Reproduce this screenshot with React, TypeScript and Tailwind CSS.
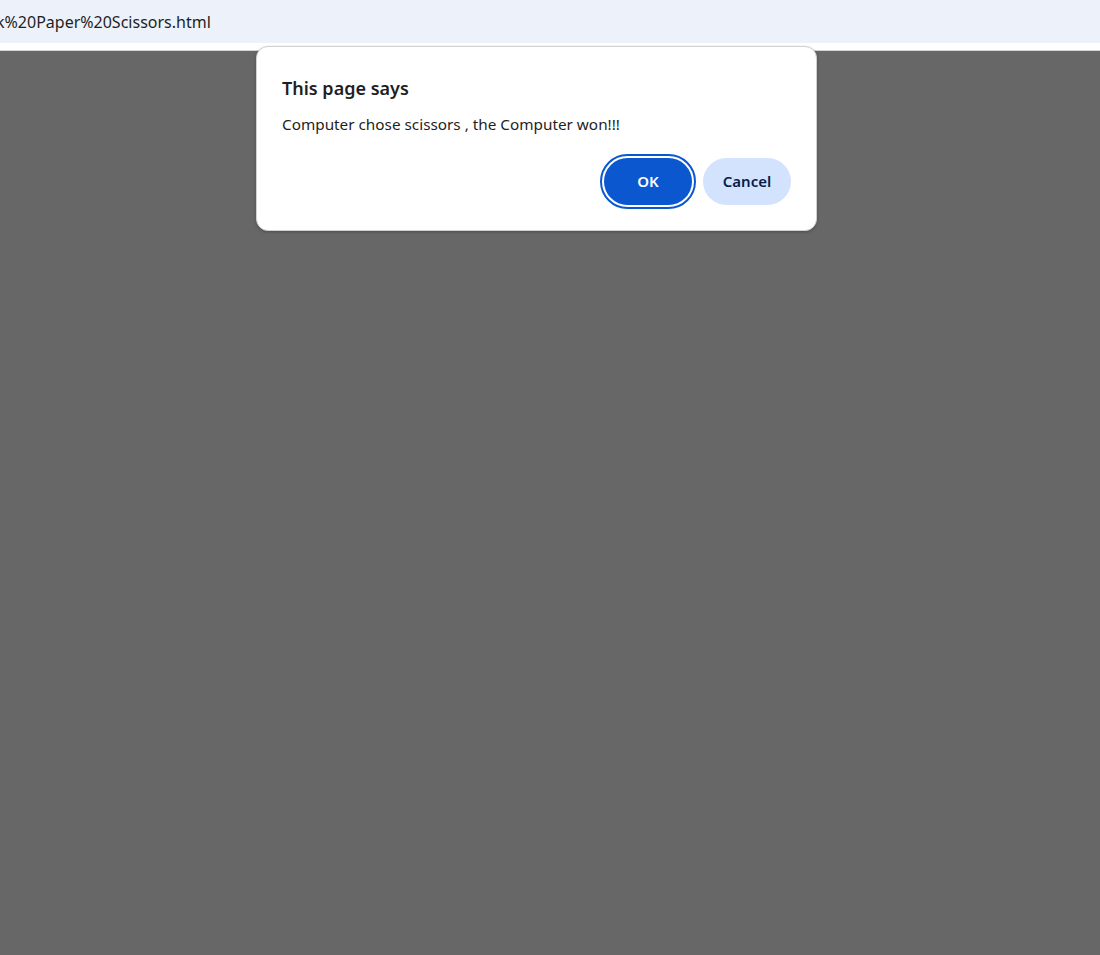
const App = () => {
  return (
    <div className="relative flex h-[955px] w-[1100px] flex-col overflow-hidden bg-white font-['Noto_Sans','Open_Sans',sans-serif]">
      {/* Address bar strip */}
      <div className="flex h-[43px] items-center bg-[#ecf1fa] overflow-hidden">
        <span className="-ml-[4px] whitespace-nowrap text-[16px] text-[#1f1f1f]">k%20Paper%20Scissors.html</span>
      </div>
      <div className="h-[7px] bg-white" />
      <div className="h-[1px] bg-[#d4d4d4]" />

      {/* Dimmed page */}
      <div className="flex-1 bg-[#676767]" />

      {/* Alert dialog */}
      <div className="absolute left-[256px] top-[46px] w-[561px] rounded-[12px] border border-[#d0d0d0] bg-white px-[25px] pt-[28px] pb-[25px] shadow-[0_1px_3px_rgba(0,0,0,0.25)]">
        <h2 className="text-[18px] font-semibold leading-[26px] text-[#1f1f1f]">This page says</h2>
        <p className="mt-[13px] text-[15.3px] leading-[21px] text-[#1f1f1f]">Computer chose scissors , the Computer won!!!</p>
        <div className="mt-[23px] flex justify-end gap-[11px]">
          <button className="h-[47px] w-[88px] rounded-full bg-[#0b57d0] text-[15px] font-semibold text-white outline outline-2 outline-offset-2 outline-[#0b57d0]">
            OK
          </button>
          <button className="h-[47px] w-[88px] rounded-full bg-[#d3e3fd] text-[15px] font-semibold text-[#041e49]">
            Cancel
          </button>
        </div>
      </div>
    </div>
  );
};

export default App;
